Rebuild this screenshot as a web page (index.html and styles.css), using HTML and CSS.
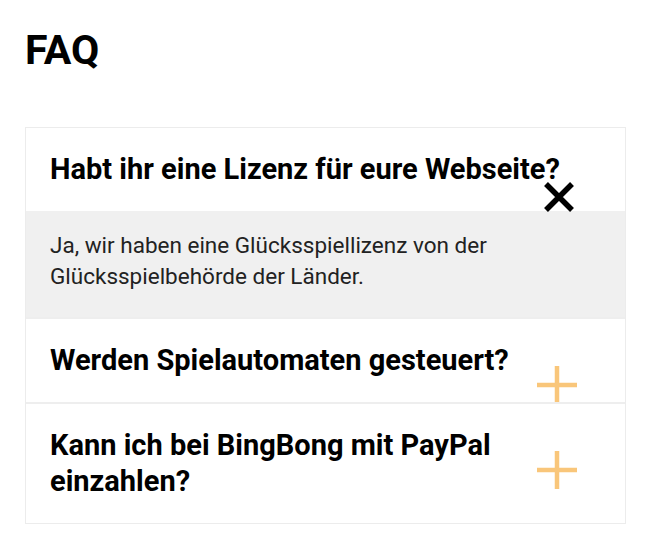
FILE: index.html
```html
<!DOCTYPE html>
<html>
<head>
  <meta charset="UTF-8">
  <meta name="viewport" content="width=device-width, initial-scale=1.0">
  <title>FAQ</title>
  <link rel="stylesheet" href="styles.css">
</head>

<body>
  <div class="page">
    <h1 class="title">FAQ</h1>

    <div class="faq-list">
      <div class="faq-item open">
        <div class="question">
          Habt ihr eine Lizenz für eure Webseite?
          <svg class="icon icon-close" width="32" height="30" viewBox="0 0 32 30">
            <path d="M3 2 L29 28 M29 2 L3 28" stroke="#000" stroke-width="5.5" fill="none"/>
          </svg>
        </div>
        <div class="answer">
          Ja, wir haben eine Glücksspiellizenz von der Glücksspielbehörde der Länder.
        </div>
      </div>

      <div class="faq-item">
        <div class="question">
          Werden Spielautomaten gesteuert?
          <svg class="icon icon-plus" width="40" height="38" viewBox="0 0 40 38">
            <path d="M20 0 V38 M0 19 H40" stroke="#f9c67a" stroke-width="4.5" fill="none"/>
          </svg>
        </div>
      </div>

      <div class="faq-item">
        <div class="question">
          Kann ich bei BingBong mit PayPal einzahlen?
          <svg class="icon icon-plus" width="40" height="38" viewBox="0 0 40 38">
            <path d="M20 0 V38 M0 19 H40" stroke="#f9c67a" stroke-width="4.5" fill="none"/>
          </svg>
        </div>
      </div>
    </div>
  </div>
</body>
</html>
```

FILE: styles.css
```css
body {
  font-family: Roboto, "Liberation Sans", sans-serif;
  background-color: #ffffff;
  margin: 0;
  padding: 0;
  color: #000;
}

.page {
  padding: 0 24px 0 25px;
}

.title {
  font-size: 41px;
  font-weight: bold;
  line-height: 48px;
  margin: 26px 0 53px 0;
}

.faq-list {
  border: 1px solid #ececec;
}

.faq-item {
  position: relative;
}

.faq-item + .faq-item {
  border-top: 2px solid #eeeeee;
}

.question {
  font-size: 29px;
  font-weight: bold;
  line-height: 36px;
  padding: 23px 40px 24px 24px;
}

.answer {
  background-color: #f0f0f0;
  color: #222;
  font-size: 22.5px;
  line-height: 31px;
  padding: 19px 60px 25px 24px;
}

.icon {
  position: absolute;
  right: 50px;
}

.icon-close {
  top: 54px;
}

.icon-plus {
  top: 47px;
  right: 48px;
}
```
